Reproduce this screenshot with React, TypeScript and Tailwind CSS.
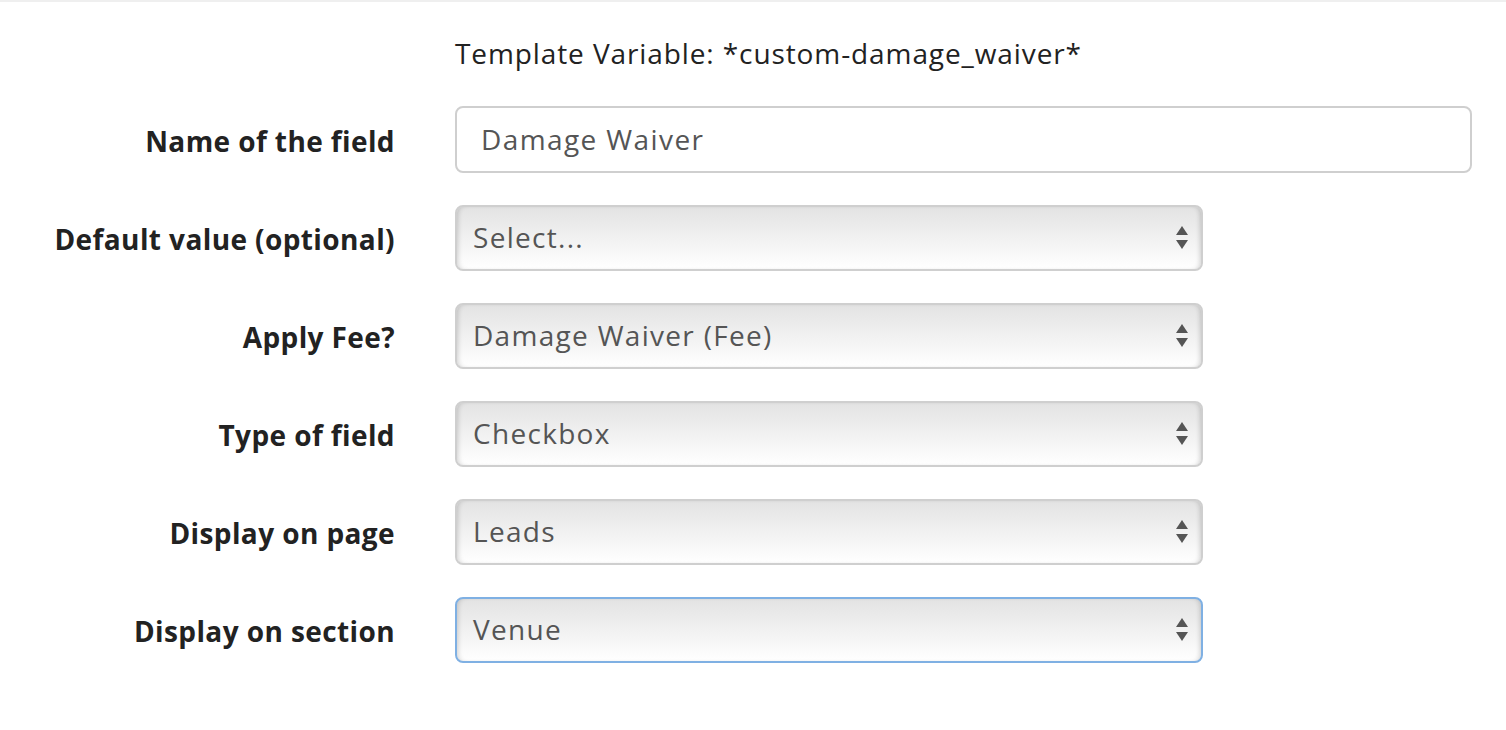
import React from "react";

const font = { fontFamily: '"Open Sans", "Liberation Sans", sans-serif' };

function Arrows() {
  return (
    <svg width="14" height="26" viewBox="0 0 14 26" className="absolute right-[12px] top-1/2 -translate-y-1/2">
      <polygon points="7,1 13,10 1,10" fill="#555" />
      <polygon points="1,15 13,15 7,24" fill="#555" />
    </svg>
  );
}

function Select({ value, focused }: { value: string; focused?: boolean }) {
  return (
    <div
      className={`relative flex h-[66px] w-[748px] items-center rounded-[8px] border-2 bg-gradient-to-b from-[#e3e3e3] to-[#ffffff] pb-[3px] pl-[16px] text-[28px] tracking-[1.3px] text-[#555] shadow-[inset_4px_0_5px_-3px_rgba(0,0,0,0.18),inset_-4px_0_5px_-3px_rgba(0,0,0,0.18)] ${
        focused ? "border-[#7fb0e3]" : "border-[#cfcfcf]"
      }`}
    >
      <span>{value}</span>
      <Arrows />
    </div>
  );
}

export default function App() {
  const rows: { label: string; value: string; focused?: boolean }[] = [
    { label: "Default value (optional)", value: "Select..." },
    { label: "Apply Fee?", value: "Damage Waiver (Fee)" },
    { label: "Type of field", value: "Checkbox" },
    { label: "Display on page", value: "Leads" },
    { label: "Display on section", value: "Venue", focused: true },
  ];
  return (
    <div className="min-h-[730px] w-full bg-white" style={font}>
      <div className="h-[2px] w-full bg-[#efefef]" />
      <div className="grid grid-cols-[395px_1fr] gap-x-[60px] pr-[34px] pt-[32px]">
        <div />
        <div className="h-[38px] text-[28px] leading-[38px] tracking-[0.9px] text-[#222]">
          Template Variable: *custom-damage_waiver*
        </div>
      </div>
      <div className="mt-[34px] grid grid-cols-[395px_1fr] items-center gap-x-[60px] gap-y-[32px] pr-[34px]">
        <div className="pt-[2px] text-right text-[28px] font-bold tracking-[0.4px] text-[#222]">Name of the field</div>
        <div className="flex h-[67px] items-center rounded-[8px] border-2 border-[#cfcfcf] bg-white pb-[2px] pl-[24px] text-[28px] tracking-[1.4px] text-[#555]">
          Damage Waiver
        </div>
        {rows.map((r) => (
          <React.Fragment key={r.label}>
            <div className="pt-[2px] text-right text-[28px] font-bold tracking-[0.4px] text-[#222]">{r.label}</div>
            <Select value={r.value} focused={r.focused} />
          </React.Fragment>
        ))}
      </div>
    </div>
  );
}
